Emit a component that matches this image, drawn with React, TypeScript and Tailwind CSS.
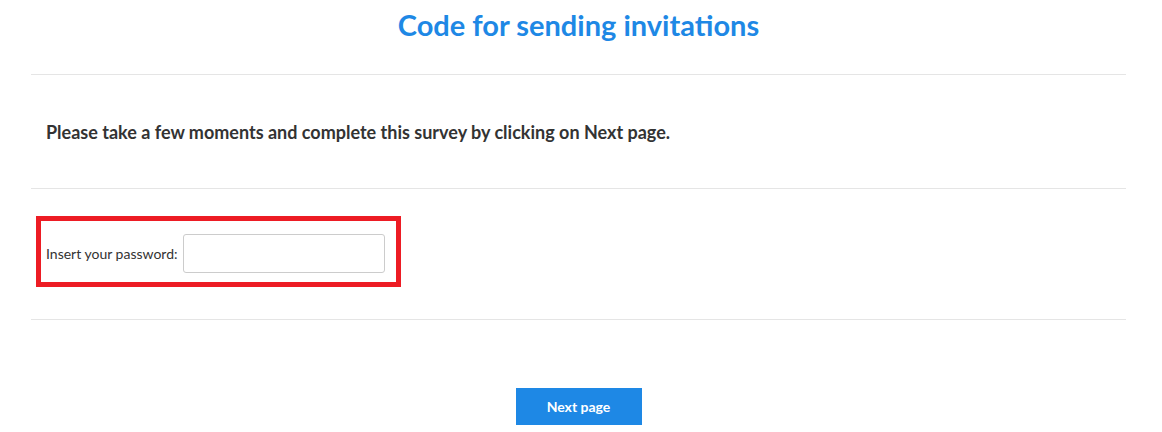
export default function App() {
  return (
    <div className="min-h-[432px] bg-white pl-[31px] pr-[36px] font-['Lato',sans-serif] text-[#333]">
      <div className="flex h-[74px] items-start justify-center pt-[7px]">
        <h1 className="text-[29px] font-bold leading-[36px] text-[#1e88e5]">
          Code for sending invitations
        </h1>
      </div>
      <div className="border-t border-[#e5e5e5]" />
      <div className="flex h-[113px] items-center px-[15px]">
        <p className="text-[18px] font-bold leading-[24px]">
          Please take a few moments and complete this survey by clicking on Next page.
        </p>
      </div>
      <div className="border-t border-[#e5e5e5]" />
      <div className="h-[130px] pt-[27px]">
        <div className="ml-[5px] flex h-[71px] w-[365px] items-center border-[5px] border-[#ed1c24] pl-[5px] pt-[4px]">
          <label className="text-[14px] leading-[20px] text-[#333]">Insert your password:</label>
          <input
            type="password"
            className="ml-[5px] h-[39px] w-[202px] rounded-[3px] border border-[#ccc] bg-white"
          />
        </div>
      </div>
      <div className="border-t border-[#e5e5e5]" />
      <div className="flex justify-center pt-[68px]">
        <button className="h-[37px] w-[126px] bg-[#1e88e5] text-[14px] font-bold text-white">
          Next page
        </button>
      </div>
    </div>
  );
}
